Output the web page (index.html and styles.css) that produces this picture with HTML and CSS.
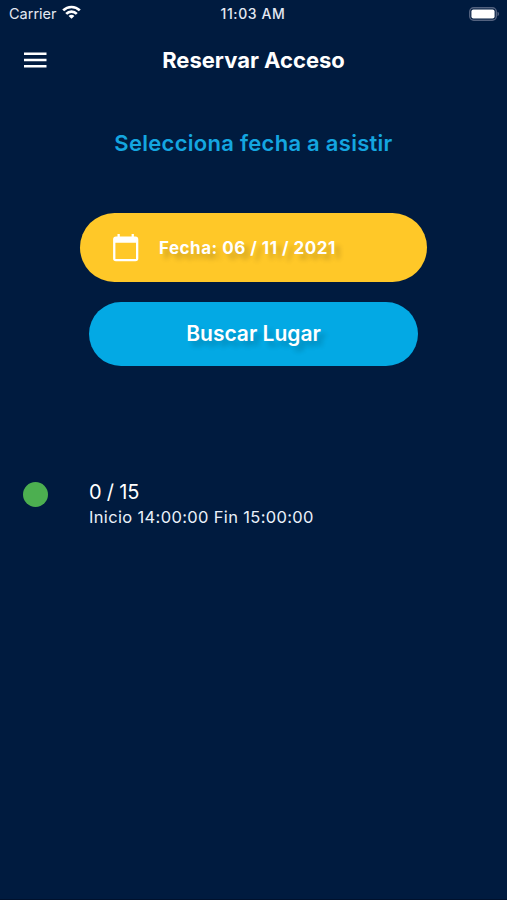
FILE: index.html
```html
<!DOCTYPE html>
<html lang="es">
<head>
<meta charset="utf-8">
<title>Reservar Acceso</title>
<link rel="stylesheet" href="styles.css">
</head>
<body>
<div class="screen">
  <header class="status">
    <div class="carrier">
      <span>Carrier</span>
      <svg width="19" height="14" viewBox="0 0 19 14" fill="none" stroke="#fff" stroke-width="2.7">
        <path d="M1.2 5.4a11.8 11.8 0 0 1 16.6 0"/>
        <path d="M4.200 8.900a7.500 7.500 0 0 1 10.600 0"/>
        <path d="M9.500 13.800 6.600 10.900a4 4 0 0 1 5.800 0z" fill="#fff" stroke="none"/>
      </svg>
    </div>
    <span class="time">11:03 AM</span>
    <svg class="battery" width="31" height="14" viewBox="0 0 31 14">
      <rect x=".7" y=".7" width="26.600" height="12.600" rx="4" fill="none" stroke="#53627f" stroke-width="1.4"/>
      <rect x="2.4" y="2.4" width="23.2" height="9.2" rx="2" fill="#fff"/>
      <path d="M28.500 4.800q1.600.6 1.600 2.200t-1.600 2.200z" fill="#53627f"/>
    </svg>
  </header>
  <nav class="appbar">
    <svg class="menu" width="23" height="16" viewBox="0 0 23 16" fill="#fff">
      <path d="M0 .5h22.5V3H0zM0 6.7h22.5v2.5H0zM0 12.9h22.5v2.5H0z"/>
    </svg>
    <h1 class="title">Reservar Acceso</h1>
  </nav>
  <h2 class="prompt">Selecciona fecha a asistir</h2>
  <div class="actions">
    <button class="pill date">
      <svg width="26" height="28" viewBox="0 0 26 28" fill="#fff">
        <path fill-rule="evenodd" d="M4.500 0h2.300v2.600h11.800V0h2.300v2.600h1.500A2.900 2.900 0 0 1 25.300 5.500v19a2.800 2.800 0 0 1-2.800 2.800H2.900A2.800 2.800 0 0 1 .1 24.500V5.500A2.900 2.900 0 0 1 3 2.600h1.500zM2.400 8.700v16.300h20.600V8.700z"/>
      </svg>
      <span class="date-text">Fecha: 06 / 11 / 2021</span>
    </button>
    <button class="pill search"><span class="search-text">Buscar Lugar</span></button>
  </div>
  <section class="slot">
    <span class="dot"></span>
    <div class="info">
      <div class="count">0 / 15</div>
      <div class="hours">Inicio 14:00:00 Fin 15:00:00</div>
    </div>
  </section>
</div>
</body>
</html>
```
FILE: styles.css
```css
* { box-sizing: border-box; }
body { margin: 0; background: #001b3f; }
.screen {
  height: 900px;
  overflow: hidden;
  color: #fff;
  font-family: Inter, "Liberation Sans", sans-serif;
  border-bottom: 1px solid #00112c;
  white-space: nowrap;
}
.status {
  display: grid;
  grid-template-columns: 1fr auto 1fr;
  height: 28px;
  padding: 0 7px 2px 9px;
  align-items: center;
  font-size: 14.5px;
  color: #e4e9f2;
}
.carrier { display: flex; align-items: center; gap: 5px; }
.carrier svg { margin-top: -3px; }
.time {
  font-weight: 500;
  font-size: 14px;
  letter-spacing: .6px;
  margin-right: 3px;
}
.battery { justify-self: end; margin-top: 1px; }
.appbar {
  display: grid;
  grid-template-columns: 60px 1fr 60px;
  height: 63px;
  align-items: center;
}
.menu { margin-left: 24px; }
.title {
  margin: 0;
  text-align: center;
  font-size: 22px;
  font-weight: 700;
}
.prompt {
  margin: 38px 0 0;
  text-align: center;
  line-height: 28px;
  font-size: 22px;
  font-weight: 600;
  letter-spacing: .28px;
  color: #14a6e0;
}
.actions {
  display: flex;
  flex-direction: column;
  align-items: center;
  gap: 20px;
  margin-top: 56px;
}
.pill {
  display: flex;
  align-items: center;
  border: 0;
  border-radius: 35px;
  color: #fff;
  font-family: inherit;
  text-shadow: 5px 5px 5px rgba(0, 0, 0, .2);
}
.date {
  width: 347px;
  height: 69px;
  padding: 0 33px;
  gap: 20px;
  background: #ffc828;
  font-size: 17px;
  font-weight: 700;
  letter-spacing: .49px;
}
.search {
  width: 329px;
  height: 64px;
  padding-bottom: 2px;
  justify-content: center;
  background: #03a9e4;
  font-size: 21px;
  font-weight: 600;
}
.slot {
  display: flex;
  gap: 41px;
  margin: 113px 0 0 23px;
}
.dot {
  width: 25px;
  height: 25px;
  margin-top: 3px;
  border-radius: 50%;
  background: #4caf50;
}
.count { font-size: 20px; line-height: 26px; letter-spacing: -.2px; }
.hours {
  font-size: 16.5px;
  line-height: 24px;
  letter-spacing: .34px;
  color: #eaf1fa;
}
```
